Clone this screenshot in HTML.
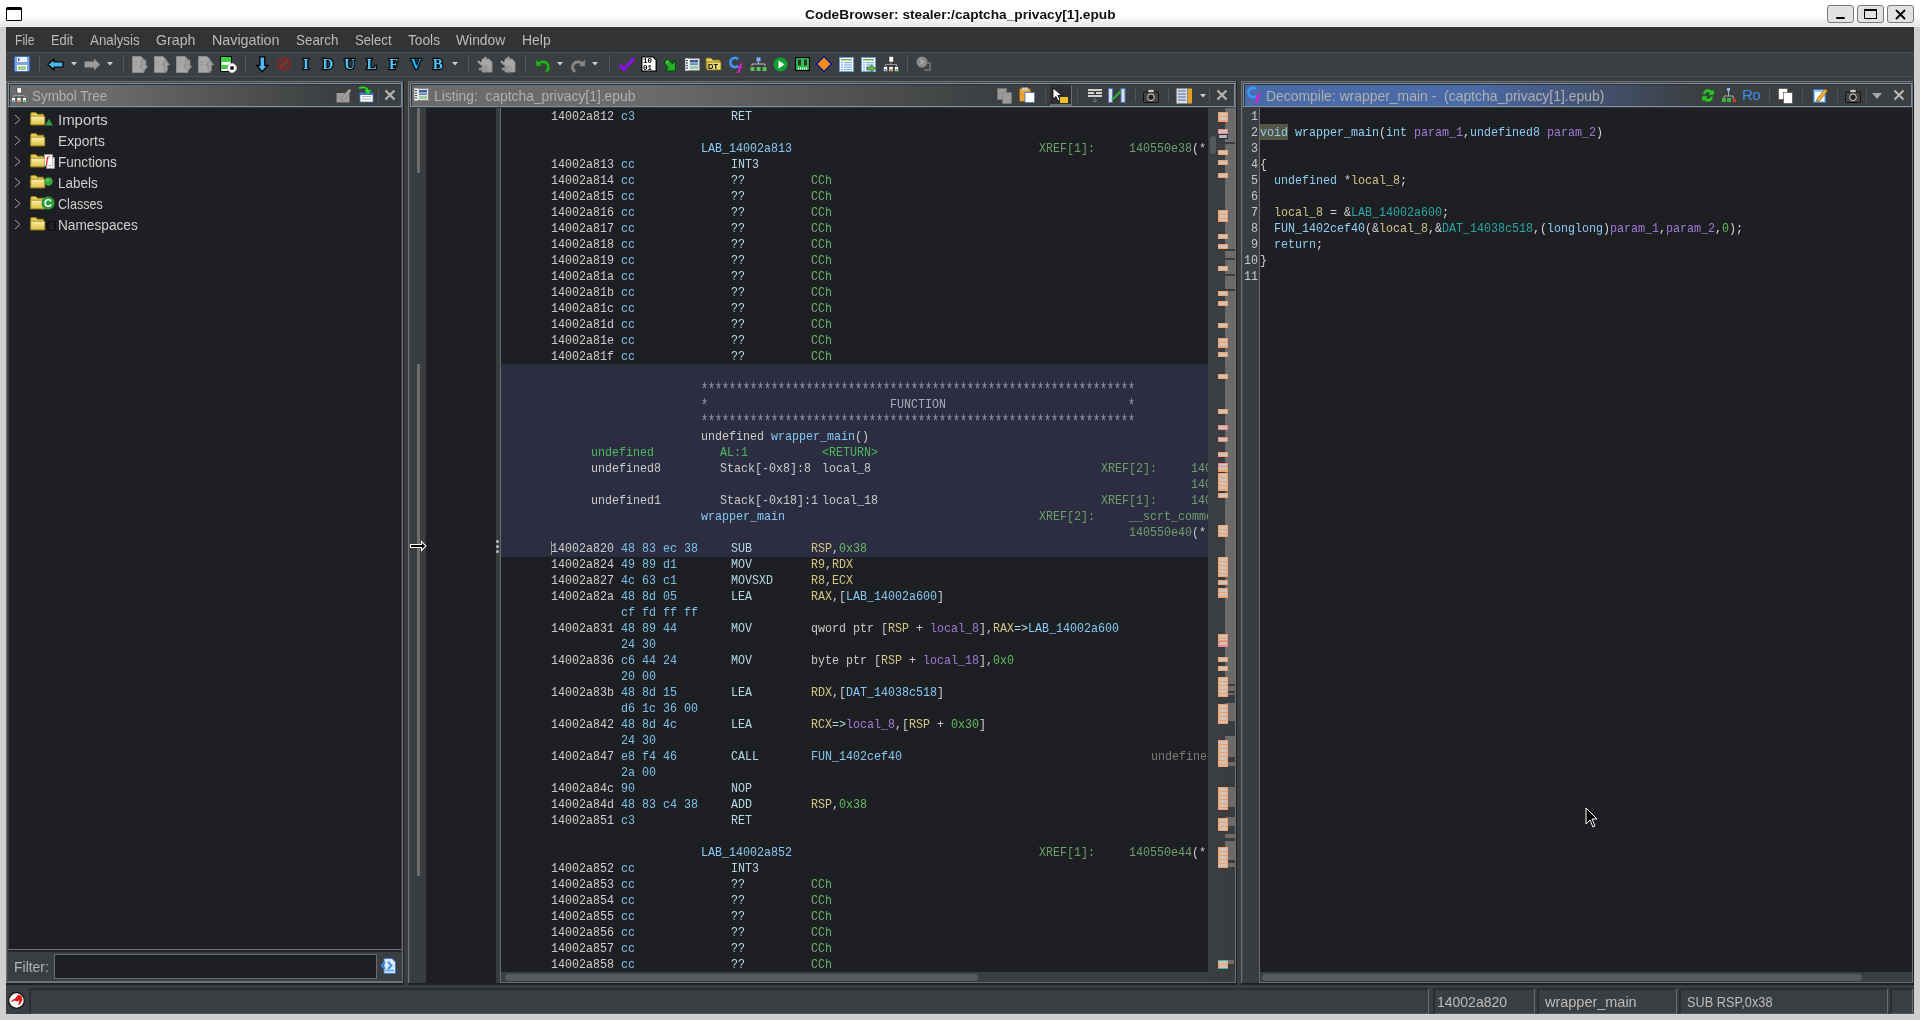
<!DOCTYPE html>
<html><head><meta charset="utf-8"><style>
*{margin:0;padding:0;box-sizing:border-box}
html,body{width:1920px;height:1020px;overflow:hidden;background:#cfcfcf;position:relative}
body>div,body div{position:absolute}

.s{font-family:"Liberation Sans",sans-serif;font-size:14px;line-height:16px;white-space:pre;color:#bbbbbb}
.m{font-family:"Liberation Mono",monospace;font-size:13px;line-height:16px;white-space:pre;color:#d4d4d4;transform:scaleX(0.8974);transform-origin:0 0}
</style></head>
<body><div id="root" style="left:0;top:0;width:1920px;height:1020px;will-change:transform">
<div style="left:0px;top:0px;width:1920px;height:27px;background:linear-gradient(#ffffff 0px,#ffffff 16px,#e6e6e6 26px,#f0f0f0 26px)"></div>
<div style="left:6px;top:7px;width:16px;height:14px;border:1.2px solid #000;border-top-width:3.6px;background:#fff;border-radius:1.5px"></div>
<div class="s" style="left:804.50px;top:7px;color:#111111;font-size:13.5px;font-weight:bold;transform:scaleX(1.0144);transform-origin:0 0;">CodeBrowser: stealer:/captcha_privacy[1].epub</div>
<div style="left:1827px;top:5px;width:27px;height:18px;border:1px solid #7a7a7a;border-radius:3px;background:#e2e2e2"></div>
<div style="left:1857px;top:5px;width:27px;height:18px;border:1px solid #7a7a7a;border-radius:3px;background:#e2e2e2"></div>
<div style="left:1887px;top:5px;width:27px;height:18px;border:1px solid #7a7a7a;border-radius:3px;background:#e2e2e2"></div>
<div style="left:1836px;top:17px;width:9px;height:2px;background:#000;border-radius:1px"></div>
<div style="left:1864px;top:9px;width:13px;height:10px;border:1.5px solid #000;border-top-width:2.5px"></div>
<svg style="position:absolute;left:1895px;top:9px" width="11" height="11" viewBox="0 0 11 11"><path d="M1.5 1.5L9.5 9.5M9.5 1.5L1.5 9.5" stroke="#000" stroke-width="1.8" stroke-linecap="round"/></svg>
<div style="left:6px;top:27px;width:1908px;height:987px;background:#3a3c3e"></div>
<div style="left:6px;top:27px;width:1908px;height:25px;background:#313335"></div>
<div style="left:6px;top:52px;width:1908px;height:1px;background:#4b4e50"></div>
<div class="s" style="left:14.60px;top:32px;color:#bbbbbb;font-size:15px;transform:scaleX(0.8075);transform-origin:0 0;">File</div>
<div class="s" style="left:51.30px;top:32px;color:#bbbbbb;font-size:15px;transform:scaleX(0.8588);transform-origin:0 0;">Edit</div>
<div class="s" style="left:90.40px;top:32px;color:#bbbbbb;font-size:15px;transform:scaleX(0.8881);transform-origin:0 0;">Analysis</div>
<div class="s" style="left:156.30px;top:32px;color:#bbbbbb;font-size:15px;transform:scaleX(0.9472);transform-origin:0 0;">Graph</div>
<div class="s" style="left:212.30px;top:32px;color:#bbbbbb;font-size:15px;transform:scaleX(0.9520);transform-origin:0 0;">Navigation</div>
<div class="s" style="left:296.30px;top:32px;color:#bbbbbb;font-size:15px;transform:scaleX(0.8927);transform-origin:0 0;">Search</div>
<div class="s" style="left:355.30px;top:32px;color:#bbbbbb;font-size:15px;transform:scaleX(0.8777);transform-origin:0 0;">Select</div>
<div class="s" style="left:408.30px;top:32px;color:#bbbbbb;font-size:15px;transform:scaleX(0.9143);transform-origin:0 0;">Tools</div>
<div class="s" style="left:456.00px;top:32px;color:#bbbbbb;font-size:15px;transform:scaleX(0.9232);transform-origin:0 0;">Window</div>
<div class="s" style="left:522.30px;top:32px;color:#bbbbbb;font-size:15px;transform:scaleX(0.9303);transform-origin:0 0;">Help</div>
<div style="left:6px;top:53px;width:1908px;height:23px;background:#3c3f41"></div>
<div style="left:6px;top:76px;width:1908px;height:1px;background:#4b4e50"></div>
<div style="left:6px;top:81px;width:398px;height:904px;background:#1e2022"></div>
<div style="left:6px;top:81px;width:397px;height:902px;background:#6f7376"></div>
<div style="left:7px;top:82px;width:395px;height:900px;background:#45484b"></div>
<div style="left:408px;top:81px;width:829px;height:904px;background:#1e2022"></div>
<div style="left:408px;top:81px;width:828px;height:902px;background:#6f7376"></div>
<div style="left:409px;top:82px;width:826px;height:900px;background:#45484b"></div>
<div style="left:1241px;top:81px;width:673px;height:904px;background:#1e2022"></div>
<div style="left:1241px;top:81px;width:672px;height:902px;background:#6f7376"></div>
<div style="left:1242px;top:82px;width:670px;height:900px;background:#45484b"></div>
<div style="left:8px;top:83px;width:394px;height:24px;border:1px solid #7a8ea5;background:#3c3f41"></div>
<div style="left:9px;top:84px;width:392px;height:1px;background:#2e3032"></div>
<div style="left:9px;top:84px;width:1px;height:22px;background:#2e3032"></div>
<div style="left:10px;top:85px;width:322px;height:21px;background:linear-gradient(90deg,#6b6b6b 0%,#6b6b6b 30%,#3c3f41 100%)"></div>
<div class="s" style="left:31.60px;top:88px;color:#b0b0b0;font-size:15px;transform:scaleX(0.8931);transform-origin:0 0;">Symbol Tree</div>
<div style="left:410px;top:83px;width:825px;height:24px;border:1px solid #7a8ea5;background:#3c3f41"></div>
<div style="left:411px;top:84px;width:823px;height:1px;background:#2e3032"></div>
<div style="left:411px;top:84px;width:1px;height:22px;background:#2e3032"></div>
<div style="left:412px;top:85px;width:583px;height:21px;background:linear-gradient(90deg,#6b6b6b 0%,#6b6b6b 40%,#3c3f41 100%)"></div>
<div class="s" style="left:433.60px;top:88px;color:#b0b0b0;font-size:15px;transform:scaleX(0.9215);transform-origin:0 0;">Listing:  captcha_privacy[1].epub</div>
<div style="left:1243px;top:83px;width:669px;height:24px;border:1px solid #7a8ea5;background:#3c3f41"></div>
<div style="left:1244px;top:84px;width:667px;height:1px;background:#2e3032"></div>
<div style="left:1244px;top:84px;width:1px;height:22px;background:#2e3032"></div>
<div style="left:1245px;top:85px;width:452px;height:21px;background:linear-gradient(90deg,#4b6aa8 0%,#4b6aa8 50%,#3c3f41 100%)"></div>
<div class="s" style="left:1266.00px;top:88px;color:#b0b0b0;font-size:15px;transform:scaleX(0.9285);transform-origin:0 0;">Decompile: wrapper_main -  (captcha_privacy[1].epub)</div>
<div style="left:8px;top:107px;width:394px;height:875px;background:#3b3e41"></div>
<div style="left:9px;top:108px;width:392px;height:841px;background:#1e1f22"></div>
<div style="left:8px;top:949px;width:394px;height:1px;background:#6a6d70"></div>
<div style="left:8px;top:950px;width:394px;height:2px;background:#25272a"></div>
<div style="left:8px;top:981px;width:394px;height:1px;background:#6f7376"></div>
<svg style="position:absolute;left:14px;top:114px" width="8" height="11" viewBox="0 0 8 11"><path d="M1 1L6 5.5L1 10" stroke="#a8a8a8" stroke-width="1" fill="none"/></svg>
<div class="s" style="left:58.20px;top:112px;color:#cfcfcf;font-size:15px;transform:scaleX(0.9960);transform-origin:0 0;">Imports</div>
<svg style="position:absolute;left:14px;top:135px" width="8" height="11" viewBox="0 0 8 11"><path d="M1 1L6 5.5L1 10" stroke="#a8a8a8" stroke-width="1" fill="none"/></svg>
<div class="s" style="left:58.20px;top:133px;color:#cfcfcf;font-size:15px;transform:scaleX(0.9204);transform-origin:0 0;">Exports</div>
<svg style="position:absolute;left:14px;top:156px" width="8" height="11" viewBox="0 0 8 11"><path d="M1 1L6 5.5L1 10" stroke="#a8a8a8" stroke-width="1" fill="none"/></svg>
<div class="s" style="left:58.20px;top:154px;color:#cfcfcf;font-size:15px;transform:scaleX(0.9039);transform-origin:0 0;">Functions</div>
<svg style="position:absolute;left:14px;top:177px" width="8" height="11" viewBox="0 0 8 11"><path d="M1 1L6 5.5L1 10" stroke="#a8a8a8" stroke-width="1" fill="none"/></svg>
<div class="s" style="left:58.20px;top:175px;color:#cfcfcf;font-size:15px;transform:scaleX(0.9005);transform-origin:0 0;">Labels</div>
<svg style="position:absolute;left:14px;top:198px" width="8" height="11" viewBox="0 0 8 11"><path d="M1 1L6 5.5L1 10" stroke="#a8a8a8" stroke-width="1" fill="none"/></svg>
<div class="s" style="left:58.20px;top:196px;color:#cfcfcf;font-size:15px;transform:scaleX(0.8397);transform-origin:0 0;">Classes</div>
<svg style="position:absolute;left:14px;top:219px" width="8" height="11" viewBox="0 0 8 11"><path d="M1 1L6 5.5L1 10" stroke="#a8a8a8" stroke-width="1" fill="none"/></svg>
<div class="s" style="left:58.20px;top:217px;color:#cfcfcf;font-size:15px;transform:scaleX(0.9115);transform-origin:0 0;">Namespaces</div>
<div class="s" style="left:13.50px;top:959px;color:#b4b4b4;font-size:15px;transform:scaleX(0.9307);transform-origin:0 0;">Filter:</div>
<div style="left:54px;top:954px;width:323px;height:25px;border:1px solid #6a6d70;background:#1e1f22"></div>
<div style="left:410px;top:107px;width:825px;height:875px;background:#3a3d40"></div>
<div style="left:426px;top:108px;width:70px;height:874px;background:#1e1f22"></div>
<div style="left:409px;top:982px;width:91px;height:1px;background:#3a3d40"></div>
<div style="left:426px;top:982px;width:70px;height:1px;background:#1e1f22"></div>
<div style="left:500px;top:108px;width:1px;height:875px;background:#6b6b6b"></div>
<div style="left:501px;top:108px;width:707px;height:864px;background:#1e1f22"></div>
<div style="left:417px;top:108px;width:3px;height:65px;background:#6e6e6e"></div>
<div style="left:417px;top:364px;width:3px;height:512px;background:#6e6e6e"></div>
<div style="left:501px;top:364px;width:707px;height:193px;background:#2c2d40"></div>
<div style="left:501px;top:972px;width:707px;height:10px;background:#3c3f42"></div>
<div style="left:500px;top:982px;width:735px;height:1px;background:#6b6b6b"></div>
<div style="left:505px;top:974px;width:473px;height:7px;background:#575b5f;border-radius:4px"></div>
<div style="left:1208px;top:108px;width:10px;height:864px;background:#3c3f42"></div>
<div style="left:1210px;top:136px;width:6px;height:18px;background:#55595c;border-radius:3px"></div>
<div style="left:1218px;top:108px;width:17px;height:874px;background:#3a3d40"></div>
<div style="left:1225px;top:108px;width:10px;height:587px;background:#6b6b6b"></div>
<div style="left:1225px;top:703px;width:10px;height:18px;background:#6b6b6b"></div>
<div style="left:1225px;top:736px;width:10px;height:21px;background:#6b6b6b"></div>
<div style="left:1225px;top:762px;width:10px;height:4px;background:#6b6b6b"></div>
<div style="left:1225px;top:787px;width:10px;height:20px;background:#6b6b6b"></div>
<div style="left:1225px;top:817px;width:10px;height:9px;background:#6b6b6b"></div>
<div style="left:1225px;top:834px;width:10px;height:4px;background:#6b6b6b"></div>
<div style="left:1225px;top:841px;width:10px;height:19px;background:#6b6b6b"></div>
<div style="left:1225px;top:863px;width:10px;height:4px;background:#6b6b6b"></div>
<div style="left:1225px;top:142px;width:10px;height:2px;background:#3a3d40"></div>
<div style="left:1225px;top:249px;width:10px;height:2px;background:#3a3d40"></div>
<div style="left:1225px;top:258px;width:10px;height:2px;background:#3a3d40"></div>
<div style="left:1225px;top:274px;width:10px;height:2px;background:#3a3d40"></div>
<div style="left:1225px;top:289px;width:10px;height:2px;background:#3a3d40"></div>
<div style="left:1225px;top:684px;width:10px;height:2px;background:#3a3d40"></div>
<div style="left:1225px;top:691px;width:10px;height:2px;background:#3a3d40"></div>
<div style="left:1228px;top:960px;width:6px;height:4px;background:#6b6b6b"></div>
<div style="left:1218px;top:112px;width:10px;height:10px;background:#f2a06c"></div>
<div style="left:1219px;top:113px;width:8px;height:8px;background:repeating-linear-gradient(#d2c2b6 0 3px,#f2a06c 3px 4px)"></div>
<div style="left:1218px;top:150px;width:10px;height:5px;background:#f2a06c"></div>
<div style="left:1219px;top:151px;width:8px;height:3px;background:repeating-linear-gradient(#d2c2b6 0 3px,#f2a06c 3px 4px)"></div>
<div style="left:1218px;top:160px;width:10px;height:5px;background:#f2a06c"></div>
<div style="left:1219px;top:161px;width:8px;height:3px;background:repeating-linear-gradient(#d2c2b6 0 3px,#f2a06c 3px 4px)"></div>
<div style="left:1218px;top:173px;width:10px;height:5px;background:#f2a06c"></div>
<div style="left:1219px;top:174px;width:8px;height:3px;background:repeating-linear-gradient(#d2c2b6 0 3px,#f2a06c 3px 4px)"></div>
<div style="left:1218px;top:210px;width:10px;height:12px;background:#f2a06c"></div>
<div style="left:1219px;top:211px;width:8px;height:10px;background:repeating-linear-gradient(#d2c2b6 0 3px,#f2a06c 3px 4px)"></div>
<div style="left:1218px;top:234px;width:10px;height:5px;background:#f2a06c"></div>
<div style="left:1219px;top:235px;width:8px;height:3px;background:repeating-linear-gradient(#d2c2b6 0 3px,#f2a06c 3px 4px)"></div>
<div style="left:1218px;top:244px;width:10px;height:5px;background:#f2a06c"></div>
<div style="left:1219px;top:245px;width:8px;height:3px;background:repeating-linear-gradient(#d2c2b6 0 3px,#f2a06c 3px 4px)"></div>
<div style="left:1218px;top:266px;width:10px;height:5px;background:#f2a06c"></div>
<div style="left:1219px;top:267px;width:8px;height:3px;background:repeating-linear-gradient(#d2c2b6 0 3px,#f2a06c 3px 4px)"></div>
<div style="left:1218px;top:291px;width:10px;height:5px;background:#f2a06c"></div>
<div style="left:1219px;top:292px;width:8px;height:3px;background:repeating-linear-gradient(#d2c2b6 0 3px,#f2a06c 3px 4px)"></div>
<div style="left:1218px;top:301px;width:10px;height:5px;background:#f2a06c"></div>
<div style="left:1219px;top:302px;width:8px;height:3px;background:repeating-linear-gradient(#d2c2b6 0 3px,#f2a06c 3px 4px)"></div>
<div style="left:1218px;top:323px;width:10px;height:5px;background:#f2a06c"></div>
<div style="left:1219px;top:324px;width:8px;height:3px;background:repeating-linear-gradient(#d2c2b6 0 3px,#f2a06c 3px 4px)"></div>
<div style="left:1218px;top:338px;width:10px;height:10px;background:#f2a06c"></div>
<div style="left:1219px;top:339px;width:8px;height:8px;background:repeating-linear-gradient(#d2c2b6 0 3px,#f2a06c 3px 4px)"></div>
<div style="left:1218px;top:352px;width:10px;height:5px;background:#f2a06c"></div>
<div style="left:1219px;top:353px;width:8px;height:3px;background:repeating-linear-gradient(#d2c2b6 0 3px,#f2a06c 3px 4px)"></div>
<div style="left:1218px;top:374px;width:10px;height:5px;background:#f2a06c"></div>
<div style="left:1219px;top:375px;width:8px;height:3px;background:repeating-linear-gradient(#d2c2b6 0 3px,#f2a06c 3px 4px)"></div>
<div style="left:1218px;top:409px;width:10px;height:5px;background:#f2a06c"></div>
<div style="left:1219px;top:410px;width:8px;height:3px;background:repeating-linear-gradient(#d2c2b6 0 3px,#f2a06c 3px 4px)"></div>
<div style="left:1218px;top:452px;width:10px;height:5px;background:#f2a06c"></div>
<div style="left:1219px;top:453px;width:8px;height:3px;background:repeating-linear-gradient(#d2c2b6 0 3px,#f2a06c 3px 4px)"></div>
<div style="left:1218px;top:466px;width:10px;height:6px;background:#f2a06c"></div>
<div style="left:1219px;top:467px;width:8px;height:4px;background:repeating-linear-gradient(#d2c2b6 0 3px,#f2a06c 3px 4px)"></div>
<div style="left:1218px;top:473px;width:10px;height:18px;background:#f2a06c"></div>
<div style="left:1219px;top:474px;width:8px;height:16px;background:repeating-linear-gradient(#d2c2b6 0 3px,#f2a06c 3px 4px)"></div>
<div style="left:1218px;top:493px;width:10px;height:5px;background:#f2a06c"></div>
<div style="left:1219px;top:494px;width:8px;height:3px;background:repeating-linear-gradient(#d2c2b6 0 3px,#f2a06c 3px 4px)"></div>
<div style="left:1218px;top:525px;width:10px;height:12px;background:#f2a06c"></div>
<div style="left:1219px;top:526px;width:8px;height:10px;background:repeating-linear-gradient(#d2c2b6 0 3px,#f2a06c 3px 4px)"></div>
<div style="left:1218px;top:557px;width:10px;height:20px;background:#f2a06c"></div>
<div style="left:1219px;top:558px;width:8px;height:18px;background:repeating-linear-gradient(#d2c2b6 0 3px,#f2a06c 3px 4px)"></div>
<div style="left:1218px;top:580px;width:10px;height:5px;background:#f2a06c"></div>
<div style="left:1219px;top:581px;width:8px;height:3px;background:repeating-linear-gradient(#d2c2b6 0 3px,#f2a06c 3px 4px)"></div>
<div style="left:1218px;top:588px;width:10px;height:10px;background:#f2a06c"></div>
<div style="left:1219px;top:589px;width:8px;height:8px;background:repeating-linear-gradient(#d2c2b6 0 3px,#f2a06c 3px 4px)"></div>
<div style="left:1218px;top:634px;width:10px;height:7px;background:#f2a06c"></div>
<div style="left:1219px;top:635px;width:8px;height:5px;background:repeating-linear-gradient(#d2c2b6 0 3px,#f2a06c 3px 4px)"></div>
<div style="left:1218px;top:657px;width:10px;height:5px;background:#f2a06c"></div>
<div style="left:1219px;top:658px;width:8px;height:3px;background:repeating-linear-gradient(#d2c2b6 0 3px,#f2a06c 3px 4px)"></div>
<div style="left:1218px;top:666px;width:10px;height:5px;background:#f2a06c"></div>
<div style="left:1219px;top:667px;width:8px;height:3px;background:repeating-linear-gradient(#d2c2b6 0 3px,#f2a06c 3px 4px)"></div>
<div style="left:1218px;top:677px;width:10px;height:20px;background:#f2a06c"></div>
<div style="left:1219px;top:678px;width:8px;height:18px;background:repeating-linear-gradient(#d2c2b6 0 3px,#f2a06c 3px 4px)"></div>
<div style="left:1218px;top:704px;width:10px;height:20px;background:#f2a06c"></div>
<div style="left:1219px;top:705px;width:8px;height:18px;background:repeating-linear-gradient(#d2c2b6 0 3px,#f2a06c 3px 4px)"></div>
<div style="left:1218px;top:740px;width:10px;height:27px;background:#f2a06c"></div>
<div style="left:1219px;top:741px;width:8px;height:25px;background:repeating-linear-gradient(#d2c2b6 0 3px,#f2a06c 3px 4px)"></div>
<div style="left:1218px;top:787px;width:10px;height:23px;background:#f2a06c"></div>
<div style="left:1219px;top:788px;width:8px;height:21px;background:repeating-linear-gradient(#d2c2b6 0 3px,#f2a06c 3px 4px)"></div>
<div style="left:1218px;top:818px;width:10px;height:13px;background:#f2a06c"></div>
<div style="left:1219px;top:819px;width:8px;height:11px;background:repeating-linear-gradient(#d2c2b6 0 3px,#f2a06c 3px 4px)"></div>
<div style="left:1218px;top:847px;width:10px;height:21px;background:#f2a06c"></div>
<div style="left:1219px;top:848px;width:8px;height:19px;background:repeating-linear-gradient(#d2c2b6 0 3px,#f2a06c 3px 4px)"></div>
<div style="left:1218px;top:129px;width:10px;height:5px;background:#e88a8a"></div>
<div style="left:1219px;top:130px;width:8px;height:3px;background:repeating-linear-gradient(#d2c2b6 0 3px,#e88a8a 3px 4px)"></div>
<div style="left:1218px;top:425px;width:10px;height:5px;background:#e88a8a"></div>
<div style="left:1219px;top:426px;width:8px;height:3px;background:repeating-linear-gradient(#d2c2b6 0 3px,#e88a8a 3px 4px)"></div>
<div style="left:1218px;top:437px;width:10px;height:5px;background:#e88a8a"></div>
<div style="left:1219px;top:438px;width:8px;height:3px;background:repeating-linear-gradient(#d2c2b6 0 3px,#e88a8a 3px 4px)"></div>
<div style="left:1218px;top:463px;width:10px;height:4px;background:#e88a8a"></div>
<div style="left:1219px;top:464px;width:8px;height:2px;background:repeating-linear-gradient(#d2c2b6 0 3px,#e88a8a 3px 4px)"></div>
<div style="left:1218px;top:641px;width:10px;height:6px;background:#e88a8a"></div>
<div style="left:1219px;top:642px;width:8px;height:4px;background:repeating-linear-gradient(#d2c2b6 0 3px,#e88a8a 3px 4px)"></div>
<div style="left:1218px;top:134px;width:10px;height:5px;background:#2a2c40"></div>
<div style="left:1219px;top:135px;width:8px;height:3px;background:repeating-linear-gradient(#b8b8c0 0 3px,#2a2c40 3px 4px)"></div>
<div style="left:1218px;top:960px;width:10px;height:9px;background:#f2a06c"></div>
<div style="left:1219px;top:961px;width:8px;height:7px;background:repeating-linear-gradient(#d2c2b6 0 3px,#f2a06c 3px 4px)"></div>
<div style="left:1218px;top:960px;width:10px;height:1px;background:#40b0b0"></div>
<div style="left:1218px;top:968px;width:10px;height:1px;background:#40b0b0"></div>
<div style="left:501px;top:108px;width:707px;height:864px;overflow:hidden">
<div class="m" style="left:50px;top:1px;color:#cecece;">14002a812</div>
<div class="m" style="left:120px;top:1px;color:#7cc0ea;">c3</div>
<div class="m" style="left:230px;top:1px;color:#b2d8e4;">RET</div>
<div class="m" style="left:200px;top:33px;color:#86c8f4;">LAB_14002a813</div>
<div class="m" style="left:538px;top:33px;color:#6e9e6e;">XREF[1]:</div>
<div class="m" style="left:628px;top:33px;color:#6e9e6e;">140550e38</div>
<div class="m" style="left:691px;top:33px;color:#cacaca;">(*</div>
<div class="m" style="left:50px;top:49px;color:#cecece;">14002a813</div>
<div class="m" style="left:120px;top:49px;color:#7cc0ea;">cc</div>
<div class="m" style="left:230px;top:49px;color:#b2d8e4;">INT3</div>
<div class="m" style="left:50px;top:65px;color:#cecece;">14002a814</div>
<div class="m" style="left:120px;top:65px;color:#7cc0ea;">cc</div>
<div class="m" style="left:230px;top:65px;color:#b2d8e4;">??</div>
<div class="m" style="left:310px;top:65px;color:#6ab36a;">CCh</div>
<div class="m" style="left:50px;top:81px;color:#cecece;">14002a815</div>
<div class="m" style="left:120px;top:81px;color:#7cc0ea;">cc</div>
<div class="m" style="left:230px;top:81px;color:#b2d8e4;">??</div>
<div class="m" style="left:310px;top:81px;color:#6ab36a;">CCh</div>
<div class="m" style="left:50px;top:97px;color:#cecece;">14002a816</div>
<div class="m" style="left:120px;top:97px;color:#7cc0ea;">cc</div>
<div class="m" style="left:230px;top:97px;color:#b2d8e4;">??</div>
<div class="m" style="left:310px;top:97px;color:#6ab36a;">CCh</div>
<div class="m" style="left:50px;top:113px;color:#cecece;">14002a817</div>
<div class="m" style="left:120px;top:113px;color:#7cc0ea;">cc</div>
<div class="m" style="left:230px;top:113px;color:#b2d8e4;">??</div>
<div class="m" style="left:310px;top:113px;color:#6ab36a;">CCh</div>
<div class="m" style="left:50px;top:129px;color:#cecece;">14002a818</div>
<div class="m" style="left:120px;top:129px;color:#7cc0ea;">cc</div>
<div class="m" style="left:230px;top:129px;color:#b2d8e4;">??</div>
<div class="m" style="left:310px;top:129px;color:#6ab36a;">CCh</div>
<div class="m" style="left:50px;top:145px;color:#cecece;">14002a819</div>
<div class="m" style="left:120px;top:145px;color:#7cc0ea;">cc</div>
<div class="m" style="left:230px;top:145px;color:#b2d8e4;">??</div>
<div class="m" style="left:310px;top:145px;color:#6ab36a;">CCh</div>
<div class="m" style="left:50px;top:161px;color:#cecece;">14002a81a</div>
<div class="m" style="left:120px;top:161px;color:#7cc0ea;">cc</div>
<div class="m" style="left:230px;top:161px;color:#b2d8e4;">??</div>
<div class="m" style="left:310px;top:161px;color:#6ab36a;">CCh</div>
<div class="m" style="left:50px;top:177px;color:#cecece;">14002a81b</div>
<div class="m" style="left:120px;top:177px;color:#7cc0ea;">cc</div>
<div class="m" style="left:230px;top:177px;color:#b2d8e4;">??</div>
<div class="m" style="left:310px;top:177px;color:#6ab36a;">CCh</div>
<div class="m" style="left:50px;top:193px;color:#cecece;">14002a81c</div>
<div class="m" style="left:120px;top:193px;color:#7cc0ea;">cc</div>
<div class="m" style="left:230px;top:193px;color:#b2d8e4;">??</div>
<div class="m" style="left:310px;top:193px;color:#6ab36a;">CCh</div>
<div class="m" style="left:50px;top:209px;color:#cecece;">14002a81d</div>
<div class="m" style="left:120px;top:209px;color:#7cc0ea;">cc</div>
<div class="m" style="left:230px;top:209px;color:#b2d8e4;">??</div>
<div class="m" style="left:310px;top:209px;color:#6ab36a;">CCh</div>
<div class="m" style="left:50px;top:225px;color:#cecece;">14002a81e</div>
<div class="m" style="left:120px;top:225px;color:#7cc0ea;">cc</div>
<div class="m" style="left:230px;top:225px;color:#b2d8e4;">??</div>
<div class="m" style="left:310px;top:225px;color:#6ab36a;">CCh</div>
<div class="m" style="left:50px;top:241px;color:#cecece;">14002a81f</div>
<div class="m" style="left:120px;top:241px;color:#7cc0ea;">cc</div>
<div class="m" style="left:230px;top:241px;color:#b2d8e4;">??</div>
<div class="m" style="left:310px;top:241px;color:#6ab36a;">CCh</div>
<div class="m" style="left:200px;top:273px;color:#8c9cb4;transform:scale(0.8974,1.35);transform-origin:0 2px">**************************************************************</div>
<div class="m" style="left:200px;top:289px;color:#8c9cb4;transform:scale(0.8974,1.35);transform-origin:0 2px">*</div>
<div class="m" style="left:389px;top:289px;color:#a8a8b8;">FUNCTION</div>
<div class="m" style="left:627px;top:289px;color:#8c9cb4;transform:scale(0.8974,1.35);transform-origin:0 2px">*</div>
<div class="m" style="left:200px;top:305px;color:#8c9cb4;transform:scale(0.8974,1.35);transform-origin:0 2px">**************************************************************</div>
<div class="m" style="left:200px;top:321px;color:#cacaca;">undefined</div>
<div class="m" style="left:270px;top:321px;color:#86c8f4;">wrapper_main</div>
<div class="m" style="left:354px;top:321px;color:#cacaca;">()</div>
<div class="m" style="left:90px;top:337px;color:#4cb85c;">undefined</div>
<div class="m" style="left:219px;top:337px;color:#4cb85c;">AL:1</div>
<div class="m" style="left:321px;top:337px;color:#4cb85c;">&lt;RETURN&gt;</div>
<div class="m" style="left:90px;top:353px;color:#cacaca;">undefined8</div>
<div class="m" style="left:219px;top:353px;color:#cacaca;">Stack[-0x8]:8</div>
<div class="m" style="left:321px;top:353px;color:#cacaca;">local_8</div>
<div class="m" style="left:600px;top:353px;color:#6e9e6e;">XREF[2]:</div>
<div class="m" style="left:690px;top:353px;color:#6e9e6e;">14002a831(W)</div>
<div class="m" style="left:690px;top:369px;color:#6e9e6e;">14002a842(*)</div>
<div class="m" style="left:90px;top:385px;color:#cacaca;">undefined1</div>
<div class="m" style="left:219px;top:385px;color:#cacaca;">Stack[-0x18]:1</div>
<div class="m" style="left:321px;top:385px;color:#cacaca;">local_18</div>
<div class="m" style="left:600px;top:385px;color:#6e9e6e;">XREF[1]:</div>
<div class="m" style="left:690px;top:385px;color:#6e9e6e;">14002a836(W)</div>
<div class="m" style="left:200px;top:401px;color:#86c8f4;">wrapper_main</div>
<div class="m" style="left:538px;top:401px;color:#6e9e6e;">XREF[2]:</div>
<div class="m" style="left:628px;top:401px;color:#6e9e6e;">__scrt_common_main_seh</div>
<div class="m" style="left:628px;top:417px;color:#6e9e6e;">140550e40</div>
<div class="m" style="left:691px;top:417px;color:#cacaca;">(*</div>
<div class="m" style="left:50px;top:433px;color:#cecece;">14002a820</div>
<div class="m" style="left:120px;top:433px;color:#7cc0ea;">48 83 ec 38</div>
<div class="m" style="left:230px;top:433px;color:#b2d8e4;">SUB</div>
<div class="m" style="left:310px;top:433px;color:#d0c684;">RSP</div>
<div class="m" style="left:331px;top:433px;color:#cacaca;">,</div>
<div class="m" style="left:338px;top:433px;color:#62bb62;">0x38</div>
<div class="m" style="left:50px;top:449px;color:#cecece;">14002a824</div>
<div class="m" style="left:120px;top:449px;color:#7cc0ea;">49 89 d1</div>
<div class="m" style="left:230px;top:449px;color:#b2d8e4;">MOV</div>
<div class="m" style="left:310px;top:449px;color:#d0c684;">R9</div>
<div class="m" style="left:324px;top:449px;color:#cacaca;">,</div>
<div class="m" style="left:331px;top:449px;color:#d0c684;">RDX</div>
<div class="m" style="left:50px;top:465px;color:#cecece;">14002a827</div>
<div class="m" style="left:120px;top:465px;color:#7cc0ea;">4c 63 c1</div>
<div class="m" style="left:230px;top:465px;color:#b2d8e4;">MOVSXD</div>
<div class="m" style="left:310px;top:465px;color:#d0c684;">R8</div>
<div class="m" style="left:324px;top:465px;color:#cacaca;">,</div>
<div class="m" style="left:331px;top:465px;color:#d0c684;">ECX</div>
<div class="m" style="left:50px;top:481px;color:#cecece;">14002a82a</div>
<div class="m" style="left:120px;top:481px;color:#7cc0ea;">48 8d 05</div>
<div class="m" style="left:230px;top:481px;color:#b2d8e4;">LEA</div>
<div class="m" style="left:310px;top:481px;color:#d0c684;">RAX</div>
<div class="m" style="left:331px;top:481px;color:#cacaca;">,[</div>
<div class="m" style="left:345px;top:481px;color:#86c8f4;">LAB_14002a600</div>
<div class="m" style="left:436px;top:481px;color:#cacaca;">]</div>
<div class="m" style="left:120px;top:497px;color:#7cc0ea;">cf fd ff ff</div>
<div class="m" style="left:50px;top:513px;color:#cecece;">14002a831</div>
<div class="m" style="left:120px;top:513px;color:#7cc0ea;">48 89 44</div>
<div class="m" style="left:230px;top:513px;color:#b2d8e4;">MOV</div>
<div class="m" style="left:310px;top:513px;color:#cacaca;">qword ptr [</div>
<div class="m" style="left:387px;top:513px;color:#d0c684;">RSP</div>
<div class="m" style="left:408px;top:513px;color:#cacaca;"> + </div>
<div class="m" style="left:429px;top:513px;color:#a07ad8;">local_8</div>
<div class="m" style="left:478px;top:513px;color:#cacaca;">],</div>
<div class="m" style="left:492px;top:513px;color:#d0c684;">RAX</div>
<div class="m" style="left:513px;top:513px;color:#b2d8e4;">=&gt;</div>
<div class="m" style="left:527px;top:513px;color:#86c8f4;">LAB_14002a600</div>
<div class="m" style="left:120px;top:529px;color:#7cc0ea;">24 30</div>
<div class="m" style="left:50px;top:545px;color:#cecece;">14002a836</div>
<div class="m" style="left:120px;top:545px;color:#7cc0ea;">c6 44 24</div>
<div class="m" style="left:230px;top:545px;color:#b2d8e4;">MOV</div>
<div class="m" style="left:310px;top:545px;color:#cacaca;">byte ptr [</div>
<div class="m" style="left:380px;top:545px;color:#d0c684;">RSP</div>
<div class="m" style="left:401px;top:545px;color:#cacaca;"> + </div>
<div class="m" style="left:422px;top:545px;color:#a07ad8;">local_18</div>
<div class="m" style="left:478px;top:545px;color:#cacaca;">],</div>
<div class="m" style="left:492px;top:545px;color:#62bb62;">0x0</div>
<div class="m" style="left:120px;top:561px;color:#7cc0ea;">20 00</div>
<div class="m" style="left:50px;top:577px;color:#cecece;">14002a83b</div>
<div class="m" style="left:120px;top:577px;color:#7cc0ea;">48 8d 15</div>
<div class="m" style="left:230px;top:577px;color:#b2d8e4;">LEA</div>
<div class="m" style="left:310px;top:577px;color:#d0c684;">RDX</div>
<div class="m" style="left:331px;top:577px;color:#cacaca;">,[</div>
<div class="m" style="left:345px;top:577px;color:#86c8f4;">DAT_14038c518</div>
<div class="m" style="left:436px;top:577px;color:#cacaca;">]</div>
<div class="m" style="left:120px;top:593px;color:#7cc0ea;">d6 1c 36 00</div>
<div class="m" style="left:50px;top:609px;color:#cecece;">14002a842</div>
<div class="m" style="left:120px;top:609px;color:#7cc0ea;">48 8d 4c</div>
<div class="m" style="left:230px;top:609px;color:#b2d8e4;">LEA</div>
<div class="m" style="left:310px;top:609px;color:#d0c684;">RCX</div>
<div class="m" style="left:331px;top:609px;color:#b2d8e4;">=&gt;</div>
<div class="m" style="left:345px;top:609px;color:#a07ad8;">local_8</div>
<div class="m" style="left:394px;top:609px;color:#cacaca;">,[</div>
<div class="m" style="left:408px;top:609px;color:#d0c684;">RSP</div>
<div class="m" style="left:429px;top:609px;color:#cacaca;"> + </div>
<div class="m" style="left:450px;top:609px;color:#62bb62;">0x30</div>
<div class="m" style="left:478px;top:609px;color:#cacaca;">]</div>
<div class="m" style="left:120px;top:625px;color:#7cc0ea;">24 30</div>
<div class="m" style="left:50px;top:641px;color:#cecece;">14002a847</div>
<div class="m" style="left:120px;top:641px;color:#7cc0ea;">e8 f4 46</div>
<div class="m" style="left:230px;top:641px;color:#b2d8e4;">CALL</div>
<div class="m" style="left:310px;top:641px;color:#86c8f4;">FUN_1402cef40</div>
<div class="m" style="left:650px;top:641px;color:#7a7a7a;">undefined FUN_1402cef40()</div>
<div class="m" style="left:120px;top:657px;color:#7cc0ea;">2a 00</div>
<div class="m" style="left:50px;top:673px;color:#cecece;">14002a84c</div>
<div class="m" style="left:120px;top:673px;color:#7cc0ea;">90</div>
<div class="m" style="left:230px;top:673px;color:#b2d8e4;">NOP</div>
<div class="m" style="left:50px;top:689px;color:#cecece;">14002a84d</div>
<div class="m" style="left:120px;top:689px;color:#7cc0ea;">48 83 c4 38</div>
<div class="m" style="left:230px;top:689px;color:#b2d8e4;">ADD</div>
<div class="m" style="left:310px;top:689px;color:#d0c684;">RSP</div>
<div class="m" style="left:331px;top:689px;color:#cacaca;">,</div>
<div class="m" style="left:338px;top:689px;color:#62bb62;">0x38</div>
<div class="m" style="left:50px;top:705px;color:#cecece;">14002a851</div>
<div class="m" style="left:120px;top:705px;color:#7cc0ea;">c3</div>
<div class="m" style="left:230px;top:705px;color:#b2d8e4;">RET</div>
<div class="m" style="left:200px;top:737px;color:#86c8f4;">LAB_14002a852</div>
<div class="m" style="left:538px;top:737px;color:#6e9e6e;">XREF[1]:</div>
<div class="m" style="left:628px;top:737px;color:#6e9e6e;">140550e44</div>
<div class="m" style="left:691px;top:737px;color:#cacaca;">(*</div>
<div class="m" style="left:50px;top:753px;color:#cecece;">14002a852</div>
<div class="m" style="left:120px;top:753px;color:#7cc0ea;">cc</div>
<div class="m" style="left:230px;top:753px;color:#b2d8e4;">INT3</div>
<div class="m" style="left:50px;top:769px;color:#cecece;">14002a853</div>
<div class="m" style="left:120px;top:769px;color:#7cc0ea;">cc</div>
<div class="m" style="left:230px;top:769px;color:#b2d8e4;">??</div>
<div class="m" style="left:310px;top:769px;color:#6ab36a;">CCh</div>
<div class="m" style="left:50px;top:785px;color:#cecece;">14002a854</div>
<div class="m" style="left:120px;top:785px;color:#7cc0ea;">cc</div>
<div class="m" style="left:230px;top:785px;color:#b2d8e4;">??</div>
<div class="m" style="left:310px;top:785px;color:#6ab36a;">CCh</div>
<div class="m" style="left:50px;top:801px;color:#cecece;">14002a855</div>
<div class="m" style="left:120px;top:801px;color:#7cc0ea;">cc</div>
<div class="m" style="left:230px;top:801px;color:#b2d8e4;">??</div>
<div class="m" style="left:310px;top:801px;color:#6ab36a;">CCh</div>
<div class="m" style="left:50px;top:817px;color:#cecece;">14002a856</div>
<div class="m" style="left:120px;top:817px;color:#7cc0ea;">cc</div>
<div class="m" style="left:230px;top:817px;color:#b2d8e4;">??</div>
<div class="m" style="left:310px;top:817px;color:#6ab36a;">CCh</div>
<div class="m" style="left:50px;top:833px;color:#cecece;">14002a857</div>
<div class="m" style="left:120px;top:833px;color:#7cc0ea;">cc</div>
<div class="m" style="left:230px;top:833px;color:#b2d8e4;">??</div>
<div class="m" style="left:310px;top:833px;color:#6ab36a;">CCh</div>
<div class="m" style="left:50px;top:849px;color:#cecece;">14002a858</div>
<div class="m" style="left:120px;top:849px;color:#7cc0ea;">cc</div>
<div class="m" style="left:230px;top:849px;color:#b2d8e4;">??</div>
<div class="m" style="left:310px;top:849px;color:#6ab36a;">CCh</div>
</div>
<div style="left:551px;top:541px;width:1px;height:14px;background:#9a9a9a"></div>
<div style="left:1243px;top:107px;width:669px;height:875px;background:#3a3d40"></div>
<div style="left:1242px;top:982px;width:17px;height:1px;background:#3a3d40"></div>
<div style="left:1259px;top:108px;width:1px;height:875px;background:#6b6b6b"></div>
<div style="left:1260px;top:108px;width:652px;height:864px;background:#1e1f22"></div>
<div style="left:1260px;top:972px;width:652px;height:10px;background:#3c3f42"></div>
<div style="left:1259px;top:982px;width:653px;height:1px;background:#6b6b6b"></div>
<div style="left:1262px;top:974px;width:600px;height:7px;background:#575b5f;border-radius:4px"></div>
<div style="left:1260px;top:124px;width:28px;height:16px;background:#565544"></div>
<div class="m" style="left:1251px;top:109px;color:#c8c8c8;">1</div>
<div class="m" style="left:1251px;top:125px;color:#c8c8c8;">2</div>
<div class="m" style="left:1251px;top:141px;color:#c8c8c8;">3</div>
<div class="m" style="left:1251px;top:157px;color:#c8c8c8;">4</div>
<div class="m" style="left:1251px;top:173px;color:#c8c8c8;">5</div>
<div class="m" style="left:1251px;top:189px;color:#c8c8c8;">6</div>
<div class="m" style="left:1251px;top:205px;color:#c8c8c8;">7</div>
<div class="m" style="left:1251px;top:221px;color:#c8c8c8;">8</div>
<div class="m" style="left:1251px;top:237px;color:#c8c8c8;">9</div>
<div class="m" style="left:1244px;top:253px;color:#c8c8c8;">10</div>
<div class="m" style="left:1244px;top:269px;color:#c8c8c8;">11</div>
<div class="m" style="left:1260px;top:125px;color:#8ccaf0;">void</div>
<div class="m" style="left:1295px;top:125px;color:#92d0f4;">wrapper_main</div>
<div class="m" style="left:1379px;top:125px;color:#d4d4d4;">(</div>
<div class="m" style="left:1386px;top:125px;color:#8ccaf0;">int</div>
<div class="m" style="left:1414px;top:125px;color:#a07ad8;">param_1</div>
<div class="m" style="left:1463px;top:125px;color:#d4d4d4;">,</div>
<div class="m" style="left:1470px;top:125px;color:#8ccaf0;">undefined8</div>
<div class="m" style="left:1547px;top:125px;color:#a07ad8;">param_2</div>
<div class="m" style="left:1596px;top:125px;color:#d4d4d4;">)</div>
<div class="m" style="left:1260px;top:157px;color:#d4d4d4;">{</div>
<div class="m" style="left:1274px;top:173px;color:#8ccaf0;">undefined</div>
<div class="m" style="left:1344px;top:173px;color:#d4d4d4;">*</div>
<div class="m" style="left:1351px;top:173px;color:#cfc688;">local_8</div>
<div class="m" style="left:1400px;top:173px;color:#d4d4d4;">;</div>
<div class="m" style="left:1274px;top:205px;color:#cfc688;">local_8</div>
<div class="m" style="left:1323px;top:205px;color:#d4d4d4;"> = &amp;</div>
<div class="m" style="left:1351px;top:205px;color:#2aa6a6;">LAB_14002a600</div>
<div class="m" style="left:1442px;top:205px;color:#d4d4d4;">;</div>
<div class="m" style="left:1274px;top:221px;color:#92d0f4;">FUN_1402cef40</div>
<div class="m" style="left:1365px;top:221px;color:#d4d4d4;">(&amp;</div>
<div class="m" style="left:1379px;top:221px;color:#cfc688;">local_8</div>
<div class="m" style="left:1428px;top:221px;color:#d4d4d4;">,&amp;</div>
<div class="m" style="left:1442px;top:221px;color:#2aa6a6;">DAT_14038c518</div>
<div class="m" style="left:1533px;top:221px;color:#d4d4d4;">,(</div>
<div class="m" style="left:1547px;top:221px;color:#8ccaf0;">longlong</div>
<div class="m" style="left:1603px;top:221px;color:#d4d4d4;">)</div>
<div class="m" style="left:1610px;top:221px;color:#a07ad8;">param_1</div>
<div class="m" style="left:1659px;top:221px;color:#d4d4d4;">,</div>
<div class="m" style="left:1666px;top:221px;color:#a07ad8;">param_2</div>
<div class="m" style="left:1715px;top:221px;color:#d4d4d4;">,</div>
<div class="m" style="left:1722px;top:221px;color:#62bb62;">0</div>
<div class="m" style="left:1729px;top:221px;color:#d4d4d4;">);</div>
<div class="m" style="left:1274px;top:237px;color:#8ccaf0;">return</div>
<div class="m" style="left:1316px;top:237px;color:#d4d4d4;">;</div>
<div class="m" style="left:1260px;top:253px;color:#d4d4d4;">}</div>
<div style="left:6px;top:985px;width:1908px;height:29px;background:#3b3e41"></div>
<div style="left:29px;top:988px;width:1400px;height:26px;border-top:2px solid #2a2c2e;border-left:2px solid #2a2c2e;border-right:1px solid #6a6d70;border-bottom:1px solid #55585b;background:#3b3e41"></div>
<div style="left:1433px;top:988px;width:102px;height:26px;border-top:2px solid #2a2c2e;border-left:2px solid #2a2c2e;border-right:1px solid #6a6d70;border-bottom:1px solid #55585b;background:#3b3e41"></div>
<div class="s" style="left:1437.00px;top:994px;color:#bcbcbc;font-size:15px;transform:scaleX(0.9321);transform-origin:0 0;">14002a820</div>
<div style="left:1537px;top:988px;width:140px;height:26px;border-top:2px solid #2a2c2e;border-left:2px solid #2a2c2e;border-right:1px solid #6a6d70;border-bottom:1px solid #55585b;background:#3b3e41"></div>
<div class="s" style="left:1545.05px;top:994px;color:#bcbcbc;font-size:15px;transform:scaleX(0.9642);transform-origin:0 0;">wrapper_main</div>
<div style="left:1679px;top:988px;width:209px;height:26px;border-top:2px solid #2a2c2e;border-left:2px solid #2a2c2e;border-right:1px solid #6a6d70;border-bottom:1px solid #55585b;background:#3b3e41"></div>
<div class="s" style="left:1686.50px;top:994px;color:#bcbcbc;font-size:15px;transform:scaleX(0.8499);transform-origin:0 0;">SUB RSP,0x38</div>
<div style="left:1890px;top:988px;width:23px;height:26px;border-top:2px solid #2a2c2e;border-left:2px solid #2a2c2e;border-right:1px solid #6a6d70;border-bottom:1px solid #55585b;background:#3b3e41"></div>
<svg style="position:absolute;left:14px;top:56px" width="16" height="16" viewBox="0 0 16 16"><rect x="0.5" y="0.5" width="15" height="15" rx="1" fill="#7fa6e0" stroke="#3b6cc4"/><rect x="3" y="1" width="10" height="5" fill="#eef3fb"/><rect x="4" y="2" width="1.5" height="3" fill="#3b6cc4"/><rect x="3" y="9" width="10" height="6" fill="#ffffff"/><rect x="4" y="10.5" width="8" height="1.2" fill="#6cb44a"/><rect x="4" y="12.5" width="8" height="1.2" fill="#6cb44a"/></svg>
<div style="left:39px;top:55px;width:1px;height:18px;background:#55585b"></div>
<svg style="position:absolute;left:47px;top:58px" width="17" height="13" viewBox="0 0 17 13"><path d="M1 6.5L7 1V4H16V9H7V12Z" fill="#4ab8f0" stroke="#000" stroke-width="1.2" stroke-linejoin="round"/></svg>
<svg style="position:absolute;left:71px;top:62px" width="6" height="3.96" viewBox="0 0 6 3.96"><path d="M0 0H6L3.0 3.5999999999999996Z" fill="#d0d0d0"/></svg>
<svg style="position:absolute;left:84px;top:58px" width="17" height="13" viewBox="0 0 17 13"><path d="M16 6.5L10 0.5V3.5H0.5V9.5H10V12.5Z" fill="#9a9a9a"/></svg>
<svg style="position:absolute;left:107px;top:62px" width="6" height="3.96" viewBox="0 0 6 3.96"><path d="M0 0H6L3.0 3.5999999999999996Z" fill="#d0d0d0"/></svg>
<div style="left:123px;top:55px;width:1px;height:18px;background:#55585b"></div>
<svg style="position:absolute;left:132px;top:56px" width="17" height="17" viewBox="0 0 17 17"><path d="M0.5 0.5H9L12 3.5V16.5H0.5Z" fill="#a8a8a8" stroke="#8a8a8a"/><path d="M2 6H6M2 9H5" stroke="#8a8a8a" stroke-width="0.6"/><path d="M9.5 4V10H7L12 15L16 10H14V4Z" fill="#a0a0a0" stroke="#7c7c7c" stroke-width="0.6"/></svg>
<svg style="position:absolute;left:154px;top:56px" width="17" height="17" viewBox="0 0 17 17"><path d="M0.5 0.5H9L12 3.5V16.5H0.5Z" fill="#a8a8a8" stroke="#8a8a8a"/><path d="M2 6H6M2 9H5" stroke="#8a8a8a" stroke-width="0.6"/><path d="M10 15V9H7.5L12 4L16 9H13.5V15Z" fill="#a0a0a0" stroke="#7c7c7c" stroke-width="0.6"/></svg>
<svg style="position:absolute;left:176px;top:56px" width="17" height="17" viewBox="0 0 17 17"><path d="M0.5 0.5H9L12 3.5V16.5H0.5Z" fill="#a8a8a8" stroke="#8a8a8a"/><path d="M2 6H6M2 9H5" stroke="#8a8a8a" stroke-width="0.6"/><path d="M9.5 4V10H7L12 15L16 10H14V4Z" fill="#a0a0a0" stroke="#7c7c7c" stroke-width="0.6"/></svg>
<svg style="position:absolute;left:198px;top:56px" width="17" height="17" viewBox="0 0 17 17"><path d="M0.5 0.5H9L12 3.5V16.5H0.5Z" fill="#a8a8a8" stroke="#8a8a8a"/><path d="M2 6H6M2 9H5" stroke="#8a8a8a" stroke-width="0.6"/><path d="M10 15V9H7.5L12 4L16 9H13.5V15Z" fill="#a0a0a0" stroke="#7c7c7c" stroke-width="0.6"/></svg>
<svg style="position:absolute;left:220px;top:56px" width="17" height="17" viewBox="0 0 17 17"><rect x="0.5" y="0.5" width="11" height="15" fill="#40d040" stroke="#000"/><rect x="1.5" y="6" width="9" height="3" fill="#fff"/><rect x="1.5" y="13" width="9" height="2" fill="#fff"/><circle cx="12" cy="12" r="4.5" fill="#fff" stroke="#bbb"/><rect x="10.3" y="10.3" width="3.4" height="3.4" fill="#111"/></svg>
<div style="left:245px;top:55px;width:1px;height:18px;background:#55585b"></div>
<svg style="position:absolute;left:256px;top:56px" width="13" height="17" viewBox="0 0 13 17"><path d="M3.8 0.8H8.8V9.5H12L6.3 15.8L0.6 9.5H3.8Z" fill="#50b8f8" stroke="#000" stroke-width="1.3" stroke-linejoin="miter"/></svg>
<svg style="position:absolute;left:277px;top:57px" width="15" height="15" viewBox="0 0 15 15"><circle cx="7" cy="7" r="5.4" fill="none" stroke="#7e2a28" stroke-width="2.8"/><path d="M10.5 3.2L3.5 10.8" stroke="#85302c" stroke-width="2.6"/></svg>
<svg style="position:absolute;left:297px;top:56px" width="18" height="16" viewBox="0 0 18 16"><text x="9.00" y="13.3" text-anchor="middle" font-family="Liberation Serif" font-weight="bold" font-size="15" fill="#50c4f8" stroke="#080808" stroke-width="2.4" paint-order="stroke fill">I</text></svg>
<svg style="position:absolute;left:318px;top:56px" width="18" height="16" viewBox="0 0 18 16"><text x="9.80" y="13.3" text-anchor="middle" font-family="Liberation Serif" font-weight="bold" font-size="15" fill="#50c4f8" stroke="#080808" stroke-width="2.4" paint-order="stroke fill">D</text></svg>
<svg style="position:absolute;left:340px;top:56px" width="18" height="16" viewBox="0 0 18 16"><text x="9.70" y="13.3" text-anchor="middle" font-family="Liberation Serif" font-weight="bold" font-size="15" fill="#50c4f8" stroke="#080808" stroke-width="2.4" paint-order="stroke fill">U</text></svg>
<svg style="position:absolute;left:362px;top:56px" width="18" height="16" viewBox="0 0 18 16"><text x="9.50" y="13.3" text-anchor="middle" font-family="Liberation Serif" font-weight="bold" font-size="15" fill="#50c4f8" stroke="#080808" stroke-width="2.4" paint-order="stroke fill">L</text></svg>
<svg style="position:absolute;left:384px;top:56px" width="18" height="16" viewBox="0 0 18 16"><text x="9.70" y="13.3" text-anchor="middle" font-family="Liberation Serif" font-weight="bold" font-size="15" fill="#50c4f8" stroke="#080808" stroke-width="2.4" paint-order="stroke fill">F</text></svg>
<svg style="position:absolute;left:407px;top:56px" width="18" height="16" viewBox="0 0 18 16"><text x="9.20" y="13.3" text-anchor="middle" font-family="Liberation Serif" font-weight="bold" font-size="15" fill="#10b8f8" stroke="#080808" stroke-width="2.4" paint-order="stroke fill">V</text></svg>
<svg style="position:absolute;left:428px;top:56px" width="18" height="16" viewBox="0 0 18 16"><text x="9.70" y="13.3" text-anchor="middle" font-family="Liberation Serif" font-weight="bold" font-size="15" fill="#50c4f8" stroke="#080808" stroke-width="2.4" paint-order="stroke fill">B</text></svg>
<svg style="position:absolute;left:452px;top:62px" width="6" height="3.96" viewBox="0 0 6 3.96"><path d="M0 0H6L3.0 3.5999999999999996Z" fill="#d0d0d0"/></svg>
<div style="left:468px;top:55px;width:1px;height:18px;background:#55585b"></div>
<svg style="position:absolute;left:477px;top:56px" width="17" height="17" viewBox="0 0 17 17"><path d="M5 3H12L15 6V16H5Z" fill="#a8a8a8" stroke="#8a8a8a"/><path d="M1 5L4 8L9 1" stroke="#a8a8a8" stroke-width="2" fill="none"/><path d="M2 12H8V9L12 13L8 17V14H2Z" fill="#a0a0a0" stroke="#7c7c7c" stroke-width="0.6"/></svg>
<svg style="position:absolute;left:500px;top:56px" width="17" height="17" viewBox="0 0 17 17"><path d="M5 3H12L15 6V16H5Z" fill="#a8a8a8" stroke="#8a8a8a"/><path d="M1 5L4 8L9 1" stroke="#a8a8a8" stroke-width="2" fill="none"/><path d="M2 12H8V9L12 13L8 17V14H2Z" fill="#a0a0a0" stroke="#7c7c7c" stroke-width="0.6"/></svg>
<div style="left:525px;top:55px;width:1px;height:18px;background:#55585b"></div>
<svg style="position:absolute;left:534px;top:58px" width="17" height="15" viewBox="0 0 17 15"><path d="M2 2V8H8L6 6C8 4.5 12 5 13 8C13.5 10 12.5 12 11 13L13 14.5C15.5 12.5 16.5 9 15 6C13 2 8 1.5 4.5 4Z" fill="#22b422" stroke="#137a13" stroke-width="0.6"/></svg>
<svg style="position:absolute;left:557px;top:62px" width="6" height="3.96" viewBox="0 0 6 3.96"><path d="M0 0H6L3.0 3.5999999999999996Z" fill="#d0d0d0"/></svg>
<svg style="position:absolute;left:570px;top:58px" width="17" height="15" viewBox="0 0 17 15"><path d="M15 2V8H9L11 6C9 4.5 5 5 4 8C3.5 10 4.5 12 6 13L4 14.5C1.5 12.5 0.5 9 2 6C4 2 9 1.5 12.5 4Z" fill="#8a8a8a" stroke="#6a6a6a" stroke-width="0.6"/></svg>
<svg style="position:absolute;left:592px;top:62px" width="6" height="3.96" viewBox="0 0 6 3.96"><path d="M0 0H6L3.0 3.5999999999999996Z" fill="#d0d0d0"/></svg>
<div style="left:609px;top:55px;width:1px;height:18px;background:#55585b"></div>
<svg style="position:absolute;left:619px;top:57px" width="16" height="15" viewBox="0 0 16 15"><path d="M1.8 8.8L4.8 12.8L14.2 2.2" stroke="#8a10e8" stroke-width="3.2" fill="none" stroke-linecap="round" stroke-linejoin="round"/></svg>
<svg style="position:absolute;left:641px;top:56px" width="16" height="16" viewBox="0 0 16 16"><path d="M0.8 0.8H12L15.2 4V15.2H0.8Z" fill="#fff" stroke="#000" stroke-width="1.3"/><text x="2" y="7.3" font-family="Liberation Mono" font-weight="bold" font-size="7.5" fill="#000">10</text><text x="2" y="14" font-family="Liberation Mono" font-weight="bold" font-size="7.5" fill="#000">01</text></svg>
<svg style="position:absolute;left:663px;top:57px" width="16" height="16" viewBox="0 0 16 16"><path d="M1 5.5L4.8 1.8L9.5 6.5L12.5 3.5V14H2L5 11Z" fill="#24b024" stroke="#0b4a12" stroke-width="1.1" stroke-linejoin="round"/><path d="M3 5.5L4.8 3.8" stroke="#c8f0c8" stroke-width="1"/></svg>
<svg style="position:absolute;left:685px;top:58px" width="15" height="13" viewBox="0 0 15 13"><rect x="0.5" y="0.5" width="14" height="12" fill="#dfe8e8" stroke="#888"/><rect x="0.5" y="0.5" width="3" height="12" fill="#fff"/><circle cx="2" cy="2.5" r="0.8" fill="#000"/><circle cx="2" cy="5" r="0.8" fill="#000"/><circle cx="2" cy="7.5" r="0.8" fill="#000"/><circle cx="2" cy="10" r="0.8" fill="#000"/><rect x="5" y="2" width="8" height="2.5" fill="#3a5a9a"/><rect x="5" y="5.5" width="8" height="1.2" fill="#3a5a9a"/><rect x="5" y="8" width="8" height="3" fill="#9ad0a0"/></svg>
<svg style="position:absolute;left:705px;top:56px" width="17" height="15" viewBox="0 0 17 15"><path d="M1 2H6L8 4H15V13H1Z" fill="#e8d060" stroke="#7a6a10" stroke-width="0.8"/><rect x="2" y="6" width="14" height="8" fill="#f0dc70" stroke="#7a6a10" stroke-width="0.8"/><text x="3" y="13" font-family="Liberation Sans" font-weight="bold" font-size="7.5" fill="#000">DT</text></svg>
<svg style="position:absolute;left:729px;top:56px" width="17" height="17" viewBox="0 0 17 17"><path d="M9.2 3.2A4.6 4.6 0 1 0 9.2 9.8" fill="none" stroke="#3a96f8" stroke-width="2.8"/><path d="M13.5 8.2C12 7.6 11.3 8.5 11 10.5L10.2 15C9.9 16.3 8.8 16.5 7.8 16M8.8 11.2H13" fill="none" stroke="#e81ad8" stroke-width="1.6"/></svg>
<svg style="position:absolute;left:750px;top:57px" width="17" height="15" viewBox="0 0 17 15"><rect x="6.5" y="0.5" width="4" height="4" fill="#8ab8f0" stroke="#4a78c0" stroke-width="0.6"/><path d="M2 9V7H15V9M8.5 5V7" stroke="#bbb" fill="none"/><rect x="0.5" y="10" width="4" height="4" fill="#5cc05c"/><rect x="6.5" y="10" width="4" height="4" fill="#5cc05c"/><rect x="12.5" y="10" width="4" height="4" fill="#5cc05c"/></svg>
<svg style="position:absolute;left:773px;top:57px" width="15" height="15" viewBox="0 0 15 15"><circle cx="7.5" cy="7.5" r="7" fill="#10a030"/><path d="M5.5 3.5L11.5 7.5L5.5 11.5Z" fill="#fff"/></svg>
<svg style="position:absolute;left:795px;top:57px" width="15" height="15" viewBox="0 0 15 15"><rect x="0.5" y="0.5" width="14" height="13" fill="#30c050" stroke="#000" stroke-width="1.2"/><rect x="3" y="2.5" width="3" height="6" fill="#333"/><rect x="9" y="2.5" width="3" height="6" fill="#333"/><path d="M3 11.5H12" stroke="#fff" stroke-width="2" stroke-dasharray="1 1"/></svg>
<svg style="position:absolute;left:816px;top:56px" width="16" height="16" viewBox="0 0 16 16"><path d="M8 0.7L15.3 8L8 15.3L0.7 8Z" fill="#ff8a00" stroke="#1010a0" stroke-width="1.2"/><path d="M8 2.2L13.8 8L8 13.8L2.2 8Z" fill="none" stroke="#aac" stroke-width="0.5"/></svg>
<svg style="position:absolute;left:839px;top:57px" width="16" height="16" viewBox="0 0 16 16"><rect x="0.5" y="0.5" width="14" height="14" fill="#fff" stroke="#6a9ae0"/><rect x="2" y="2" width="11" height="1.5" fill="#6cb44a"/><rect x="2" y="5.0" width="2" height="1.3" fill="#8ab0e0"/><rect x="5" y="5.0" width="8" height="1.3" fill="#8ab0e0"/><rect x="2" y="7.3" width="2" height="1.3" fill="#8ab0e0"/><rect x="5" y="7.3" width="8" height="1.3" fill="#8ab0e0"/><rect x="2" y="9.6" width="2" height="1.3" fill="#8ab0e0"/><rect x="5" y="9.6" width="8" height="1.3" fill="#8ab0e0"/><rect x="2" y="11.899999999999999" width="2" height="1.3" fill="#8ab0e0"/><rect x="5" y="11.899999999999999" width="8" height="1.3" fill="#8ab0e0"/></svg>
<svg style="position:absolute;left:861px;top:57px" width="16" height="16" viewBox="0 0 16 16"><rect x="0.5" y="0.5" width="14" height="14" fill="#fff" stroke="#6a9ae0"/><rect x="2" y="2" width="11" height="1.5" fill="#6cb44a"/><rect x="2" y="5.0" width="2" height="1.3" fill="#8ab0e0"/><rect x="5" y="5.0" width="8" height="1.3" fill="#8ab0e0"/><rect x="2" y="7.3" width="2" height="1.3" fill="#8ab0e0"/><rect x="5" y="7.3" width="8" height="1.3" fill="#8ab0e0"/><rect x="2" y="9.6" width="2" height="1.3" fill="#8ab0e0"/><rect x="5" y="9.6" width="8" height="1.3" fill="#8ab0e0"/><rect x="2" y="11.899999999999999" width="2" height="1.3" fill="#8ab0e0"/><rect x="5" y="11.899999999999999" width="8" height="1.3" fill="#8ab0e0"/><path d="M6 10H10V8L15 11.5L10 15V13H6Z" fill="#6ab04a" stroke="#2a7a2a" stroke-width="0.7"/></svg>
<svg style="position:absolute;left:883px;top:56px" width="16" height="16" viewBox="0 0 16 16"><path d="M6 0.5H9.5L10.5 1.5V6H6Z" fill="#fff" stroke="#222" stroke-width="0.5"/><path d="M2.5 10V8.5H13.5V10M8 6.5V8.5" stroke="#999" fill="none"/><rect x="0.5" y="10.5" width="4" height="5" fill="#fff" stroke="#222" stroke-width="0.5"/><rect x="1.5" y="13" width="2" height="2" fill="#4a90e0"/><rect x="6" y="10.5" width="4" height="5" fill="#fff" stroke="#222" stroke-width="0.5"/><rect x="7" y="13" width="2" height="2" fill="#f07030"/><rect x="11.5" y="10.5" width="4" height="5" fill="#fff" stroke="#222" stroke-width="0.5"/><rect x="12.5" y="13" width="2" height="2" fill="#40c040"/></svg>
<div style="left:907px;top:55px;width:1px;height:18px;background:#55585b"></div>
<svg style="position:absolute;left:916px;top:56px" width="16" height="16" viewBox="0 0 16 16"><circle cx="6" cy="6" r="5.5" fill="#8a8a8a"/><path d="M4.5 3L9 6L4.5 9Z" fill="#aaa"/><path d="M10 7H14V14H8" stroke="#7a7a7a" stroke-width="1.5" fill="none"/></svg>
<svg style="position:absolute;left:11px;top:87px" width="16" height="16" viewBox="0 0 16 16"><path d="M6 0.5H9.5L10.5 1.5V6H6Z" fill="#fff" stroke="#222" stroke-width="0.5"/><path d="M2.5 10V8.5H13.5V10M8 6.5V8.5" stroke="#999" fill="none"/><rect x="0.5" y="10.5" width="4" height="5" fill="#fff" stroke="#222" stroke-width="0.5"/><rect x="1.5" y="13" width="2" height="2" fill="#4a90e0"/><rect x="6" y="10.5" width="4" height="5" fill="#fff" stroke="#222" stroke-width="0.5"/><rect x="7" y="13" width="2" height="2" fill="#f07030"/><rect x="11.5" y="10.5" width="4" height="5" fill="#fff" stroke="#222" stroke-width="0.5"/><rect x="12.5" y="13" width="2" height="2" fill="#40c040"/></svg>
<svg style="position:absolute;left:336px;top:87px" width="16" height="16" viewBox="0 0 16 16"><rect x="0.5" y="6" width="13" height="9.5" fill="#9a9a9a"/><path d="M6 11L13 2L15 3.5L8 12.5L5.5 13Z" fill="#aaa" stroke="#7a7a7a" stroke-width="0.7"/></svg>
<svg style="position:absolute;left:358px;top:86px" width="16" height="17" viewBox="0 0 16 17"><rect x="2" y="7" width="13" height="9" fill="#fff" stroke="#4a78c0" stroke-width="0.8"/><rect x="2" y="7" width="13" height="2" fill="#3a78d0"/><path d="M4 10.5H13M4 13H13" stroke="#999" stroke-width="0.8"/><path d="M1 2C6 0.5 10 1.5 10 6M7.5 4L10 7L12.5 4" stroke="#20e020" stroke-width="1.8" fill="none"/></svg>
<div style="left:378px;top:88px;width:1px;height:14px;background:#555"></div>
<svg style="position:absolute;left:384px;top:89px" width="12" height="12" viewBox="0 0 12 12"><path d="M1.5 1.5L10.5 10.5M10.5 1.5L1.5 10.5" stroke="#b4b4b4" stroke-width="2.2"/></svg>
<svg style="position:absolute;left:414px;top:88px" width="15" height="13" viewBox="0 0 15 13"><rect x="0.5" y="0.5" width="14" height="12" fill="#dfe8e8" stroke="#888"/><rect x="0.5" y="0.5" width="3" height="12" fill="#fff"/><circle cx="2" cy="2.5" r="0.8" fill="#000"/><circle cx="2" cy="5" r="0.8" fill="#000"/><circle cx="2" cy="7.5" r="0.8" fill="#000"/><circle cx="2" cy="10" r="0.8" fill="#000"/><rect x="5" y="2" width="8" height="2.5" fill="#3a5a9a"/><rect x="5" y="5.5" width="8" height="1.2" fill="#3a5a9a"/><rect x="5" y="8" width="8" height="3" fill="#9ad0a0"/></svg>
<svg style="position:absolute;left:997px;top:88px" width="16" height="16" viewBox="0 0 16 16"><rect x="0.5" y="0.5" width="9" height="11" fill="#9a9a9a" stroke="#7a7a7a" stroke-width="0.6"/><rect x="5.5" y="4.5" width="9" height="11" fill="#9a9a9a" stroke="#7a7a7a" stroke-width="0.6"/></svg>
<svg style="position:absolute;left:1019px;top:87px" width="16" height="16" viewBox="0 0 16 16"><rect x="0.5" y="1.5" width="11" height="13" rx="1" fill="#e8a030" stroke="#8a5a10" stroke-width="0.6"/><rect x="3" y="0.5" width="6" height="3" fill="#ccc"/><rect x="6" y="5.5" width="9.5" height="10" fill="#fff" stroke="#4a78c0" stroke-width="0.8"/></svg>
<div style="left:1045px;top:88px;width:1px;height:14px;background:#555"></div>
<div style="left:1050px;top:85px;width:22px;height:21px;background:#2e3033;border-right:1px solid #6a6d70;border-bottom:2px solid #6a6d70"></div>
<svg style="position:absolute;left:1052px;top:87px" width="17" height="17" viewBox="0 0 17 17"><path d="M1 1V12L4 9.5L6 14L8 13L6 8.5H10Z" fill="#fff" stroke="#000" stroke-width="0.8"/><rect x="8" y="10" width="8" height="6" fill="#f0c020"/></svg>
<div style="left:1077px;top:88px;width:1px;height:14px;background:#555"></div>
<svg style="position:absolute;left:1087px;top:88px" width="16" height="15" viewBox="0 0 16 15"><path d="M1 2H15M9 5H15M1 5H7M1 8H15" stroke="#fff" stroke-width="1.6"/><path d="M8 10V14M6 12L8 14L10 12" stroke="#888" stroke-width="1"/></svg>
<svg style="position:absolute;left:1108px;top:88px" width="18" height="15" viewBox="0 0 18 15"><rect x="0.5" y="0.5" width="4" height="14" fill="#dde" stroke="#4a78c0"/><rect x="13" y="0.5" width="4" height="14" fill="#dde" stroke="#4a78c0"/><path d="M4 12L9 7L13 3" stroke="#30b030" stroke-width="2" fill="none"/></svg>
<div style="left:1135px;top:88px;width:1px;height:14px;background:#555"></div>
<svg style="position:absolute;left:1143px;top:89px" width="16" height="14" viewBox="0 0 16 14"><rect x="0.5" y="3" width="15" height="10.5" rx="1" fill="#444" stroke="#111"/><rect x="5" y="0.5" width="6" height="3" fill="#ccc" stroke="#222" stroke-width="0.5"/><circle cx="8" cy="8.3" r="3.3" fill="#222" stroke="#ddd"/></svg>
<div style="left:1168px;top:88px;width:1px;height:14px;background:#555"></div>
<svg style="position:absolute;left:1176px;top:88px" width="17" height="16" viewBox="0 0 17 16"><rect x="0.5" y="0.5" width="11" height="15" fill="#ddd" stroke="#888"/><path d="M2 3H10M2 6H10M2 9H10M2 12H10" stroke="#4a6ab0" stroke-width="1.2"/><rect x="12" y="0.5" width="4" height="15" fill="#e0a020"/></svg>
<svg style="position:absolute;left:1200px;top:94px" width="6" height="3.96" viewBox="0 0 6 3.96"><path d="M0 0H6L3.0 3.5999999999999996Z" fill="#d0d0d0"/></svg>
<div style="left:1209px;top:88px;width:1px;height:14px;background:#555"></div>
<svg style="position:absolute;left:1216px;top:89px" width="12" height="12" viewBox="0 0 12 12"><path d="M1.5 1.5L10.5 10.5M10.5 1.5L1.5 10.5" stroke="#b4b4b4" stroke-width="2.2"/></svg>
<svg style="position:absolute;left:1247px;top:86px" width="17" height="17" viewBox="0 0 17 17"><path d="M9.2 3.2A4.6 4.6 0 1 0 9.2 9.8" fill="none" stroke="#3a96f8" stroke-width="2.8"/><path d="M13.5 8.2C12 7.6 11.3 8.5 11 10.5L10.2 15C9.9 16.3 8.8 16.5 7.8 16M8.8 11.2H13" fill="none" stroke="#e81ad8" stroke-width="1.6"/></svg>
<svg style="position:absolute;left:1700px;top:87px" width="16" height="17" viewBox="0 0 16 17"><path d="M3 7A5 5 0 0 1 12 4L14 2V8H8L10 6A3 3 0 0 0 5 8Z" fill="#30c030" stroke="#107010" stroke-width="0.5"/><path d="M13 10A5 5 0 0 1 4 13L2 15V9H8L6 11A3 3 0 0 0 11 9Z" fill="#30c030" stroke="#107010" stroke-width="0.5"/></svg>
<svg style="position:absolute;left:1721px;top:87px" width="16" height="16" viewBox="0 0 16 16"><rect x="6" y="1" width="3" height="3" fill="#8ab8f0"/><path d="M7.5 4V9M3 12V9H12V12" stroke="#aaa" fill="none"/><rect x="1" y="11" width="4" height="4" fill="#40b040"/><rect x="6" y="11" width="4" height="4" fill="#40b040"/><rect x="12" y="12" width="3" height="3" fill="#e03030"/></svg>
<div class="s" style="left:1742px;top:87px;color:#3a8ef0;font-size:15px;letter-spacing:-0.5px">Ro</div>
<div style="left:1769px;top:88px;width:1px;height:14px;background:#555"></div>
<svg style="position:absolute;left:1778px;top:88px" width="16" height="16" viewBox="0 0 16 16"><rect x="0.5" y="0.5" width="9" height="11" fill="#fff" stroke="#444" stroke-width="0.6"/><rect x="5.5" y="4.5" width="9" height="11" fill="#fff" stroke="#444" stroke-width="0.6"/></svg>
<div style="left:1802px;top:88px;width:1px;height:14px;background:#555"></div>
<svg style="position:absolute;left:1813px;top:87px" width="15" height="16" viewBox="0 0 15 16"><rect x="0.5" y="2.5" width="12" height="13" fill="#9ac8f0" stroke="#3a78c0"/><rect x="2" y="5" width="9" height="9" fill="#fff"/><path d="M4 12L12 2L14.5 4L6.5 14L3.5 14.5Z" fill="#f0b030" stroke="#8a5a10" stroke-width="0.7"/></svg>
<div style="left:1837px;top:88px;width:1px;height:14px;background:#555"></div>
<svg style="position:absolute;left:1845px;top:89px" width="16" height="14" viewBox="0 0 16 14"><rect x="0.5" y="3" width="15" height="10.5" rx="1" fill="#444" stroke="#111"/><rect x="5" y="0.5" width="6" height="3" fill="#ccc" stroke="#222" stroke-width="0.5"/><circle cx="8" cy="8.3" r="3.3" fill="#222" stroke="#ddd"/></svg>
<div style="left:1866px;top:88px;width:1px;height:14px;background:#555"></div>
<svg style="position:absolute;left:1872px;top:93px" width="10" height="6.6000000000000005" viewBox="0 0 10 6.6000000000000005"><path d="M0 0H10L5.0 6.0Z" fill="#a8a8a8"/></svg>
<svg style="position:absolute;left:1893px;top:89px" width="12" height="12" viewBox="0 0 12 12"><path d="M1.5 1.5L10.5 10.5M10.5 1.5L1.5 10.5" stroke="#b4b4b4" stroke-width="2.2"/></svg>
<svg style="position:absolute;left:30px;top:112px" width="16" height="14" viewBox="0 0 16 14"><defs><linearGradient id="fg" x1="0" y1="0" x2="0" y2="1"><stop offset="0" stop-color="#fbf0b0"/><stop offset="1" stop-color="#e0c040"/></linearGradient></defs><path d="M0.8 1.5Q0.8 0.6 1.7 0.6H6L7.5 2.2H13.5V12.8H0.8Z" fill="#e8cf50" stroke="#9a8420" stroke-width="0.8"/><path d="M0.8 4.2H14.8V12.8H0.8Z" fill="url(#fg)" stroke="#9a8420" stroke-width="0.8"/></svg>
<svg style="position:absolute;left:30px;top:133px" width="16" height="14" viewBox="0 0 16 14"><defs><linearGradient id="fg" x1="0" y1="0" x2="0" y2="1"><stop offset="0" stop-color="#fbf0b0"/><stop offset="1" stop-color="#e0c040"/></linearGradient></defs><path d="M0.8 1.5Q0.8 0.6 1.7 0.6H6L7.5 2.2H13.5V12.8H0.8Z" fill="#e8cf50" stroke="#9a8420" stroke-width="0.8"/><path d="M0.8 4.2H14.8V12.8H0.8Z" fill="url(#fg)" stroke="#9a8420" stroke-width="0.8"/></svg>
<svg style="position:absolute;left:30px;top:154px" width="16" height="14" viewBox="0 0 16 14"><defs><linearGradient id="fg" x1="0" y1="0" x2="0" y2="1"><stop offset="0" stop-color="#fbf0b0"/><stop offset="1" stop-color="#e0c040"/></linearGradient></defs><path d="M0.8 1.5Q0.8 0.6 1.7 0.6H6L7.5 2.2H13.5V12.8H0.8Z" fill="#e8cf50" stroke="#9a8420" stroke-width="0.8"/><path d="M0.8 4.2H14.8V12.8H0.8Z" fill="url(#fg)" stroke="#9a8420" stroke-width="0.8"/></svg>
<svg style="position:absolute;left:30px;top:175px" width="16" height="14" viewBox="0 0 16 14"><defs><linearGradient id="fg" x1="0" y1="0" x2="0" y2="1"><stop offset="0" stop-color="#fbf0b0"/><stop offset="1" stop-color="#e0c040"/></linearGradient></defs><path d="M0.8 1.5Q0.8 0.6 1.7 0.6H6L7.5 2.2H13.5V12.8H0.8Z" fill="#e8cf50" stroke="#9a8420" stroke-width="0.8"/><path d="M0.8 4.2H14.8V12.8H0.8Z" fill="url(#fg)" stroke="#9a8420" stroke-width="0.8"/></svg>
<svg style="position:absolute;left:30px;top:196px" width="16" height="14" viewBox="0 0 16 14"><defs><linearGradient id="fg" x1="0" y1="0" x2="0" y2="1"><stop offset="0" stop-color="#fbf0b0"/><stop offset="1" stop-color="#e0c040"/></linearGradient></defs><path d="M0.8 1.5Q0.8 0.6 1.7 0.6H6L7.5 2.2H13.5V12.8H0.8Z" fill="#e8cf50" stroke="#9a8420" stroke-width="0.8"/><path d="M0.8 4.2H14.8V12.8H0.8Z" fill="url(#fg)" stroke="#9a8420" stroke-width="0.8"/></svg>
<svg style="position:absolute;left:30px;top:217px" width="16" height="14" viewBox="0 0 16 14"><defs><linearGradient id="fg" x1="0" y1="0" x2="0" y2="1"><stop offset="0" stop-color="#fbf0b0"/><stop offset="1" stop-color="#e0c040"/></linearGradient></defs><path d="M0.8 1.5Q0.8 0.6 1.7 0.6H6L7.5 2.2H13.5V12.8H0.8Z" fill="#e8cf50" stroke="#9a8420" stroke-width="0.8"/><path d="M0.8 4.2H14.8V12.8H0.8Z" fill="url(#fg)" stroke="#9a8420" stroke-width="0.8"/></svg>
<svg style="position:absolute;left:45px;top:118px" width="8" height="8" viewBox="0 0 8 8"><path d="M4 0.5L7.8 7.5H0.2Z" fill="#2e9e48"/></svg>
<svg style="position:absolute;left:44px;top:154px" width="11" height="15" viewBox="0 0 11 15"><rect x="2.5" y="3.5" width="8" height="11" fill="#eee" stroke="#999" stroke-width="0.6"/><rect x="0.5" y="0.5" width="8" height="11" fill="#fff" stroke="#999" stroke-width="0.6"/><text x="1.8" y="9.3" font-family="Liberation Serif" font-style="italic" font-weight="bold" font-size="9.5" fill="#e81818">f</text></svg>
<svg style="position:absolute;left:44px;top:177px" width="9" height="9" viewBox="0 0 9 9"><circle cx="4.5" cy="4.5" r="4.2" fill="#3aa83a"/><circle cx="3.5" cy="3.3" r="1.8" fill="#7ad07a" opacity="0.6"/></svg>
<svg style="position:absolute;left:41px;top:196px" width="14" height="14" viewBox="0 0 14 14"><circle cx="7" cy="7" r="6.6" fill="#2e9a3a"/><text x="3" y="11.3" font-family="Liberation Sans" font-weight="bold" font-size="11" fill="#fff">C</text></svg>
<svg style="position:absolute;left:45px;top:219px" width="11" height="12" viewBox="0 0 11 12"><text x="0" y="10" font-family="Liberation Mono" font-weight="bold" font-size="11" fill="#0a0a0a">{}</text></svg>
<svg style="position:absolute;left:381px;top:958px" width="16" height="16" viewBox="0 0 16 16"><path d="M3 0.5H11L14.5 4V15.5H3Z" fill="#dce8f8" stroke="#3a78d0" stroke-width="1"/><rect x="4.5" y="11.5" width="8.5" height="2" fill="#6ab0f0"/><path d="M4 4L0.5 7.5L4 11M7 4L10.5 7.5L7 11" stroke="#3a8ae0" stroke-width="1.8" fill="none"/></svg>
<svg style="position:absolute;left:8px;top:992px" width="17" height="17" viewBox="0 0 17 17"><circle cx="8.5" cy="8.5" r="7.8" fill="#fff" stroke="#111" stroke-width="1.2"/><path d="M3 9L7 6.5L10.5 2.5L13.5 4L14.5 8L12 12.5L10 13L11.5 8.5L9 9.5L6.5 8.5L3.5 10Z" fill="#e01818"/></svg>
<svg style="position:absolute;left:409px;top:539px" width="19" height="14" viewBox="0 0 19 14"><path d="M1.5 5.5H12.5V2.5L17 7L12.5 11.5V8.5H1.5Z" fill="#000" stroke="#fff" stroke-width="1.1"/></svg>
<div style="left:496px;top:540px;width:3px;height:3px;background:#bdbdbd;border-radius:50%"></div>
<div style="left:496px;top:545px;width:3px;height:3px;background:#bdbdbd;border-radius:50%"></div>
<div style="left:496px;top:550px;width:3px;height:3px;background:#bdbdbd;border-radius:50%"></div>
<svg style="position:absolute;left:1585px;top:807px" width="14" height="22" viewBox="0 0 14 22"><path d="M1 1L1 17L5 13L8 20L10 19L7 12L12 12Z" fill="#000" stroke="#fff" stroke-width="1"/></svg>
</div></body></html>
